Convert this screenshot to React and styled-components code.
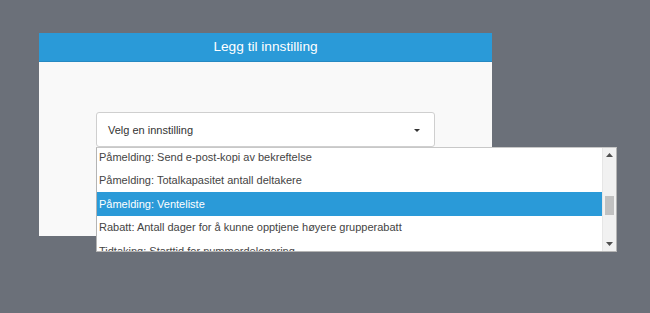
import React from 'react';
import styled, { createGlobalStyle } from "styled-components"

const options = [
  "Påmelding: Send e-post-kopi av bekreftelse",
  "Påmelding: Totalkapasitet antall deltakere",
  "Påmelding: Venteliste",
  "Rabatt: Antall dager for å kunne opptjene høyere grupperabatt",
  "Tidtaking: Starttid for nummerdelogering",
]

function App() {
  const selected = "Påmelding: Venteliste"
  return (
    <Page>
      <Global />
      <Modal>
        <Header>Legg til innstilling</Header>
        <Body>
          <SelectWrap>
            <Select>
              <span>Velg en innstilling</span>
              <Caret />
            </Select>
            <Dropdown>
              <List>
                <Inner>
                  {options.map((o) => (
                    <Option key={o} active={o === selected}>{o}</Option>
                  ))}
                </Inner>
              </List>
              <Scrollbar>
                <Arrow viewBox="0 0 7 4"><path d="M0 4 L3.5 0 L7 4 Z" /></Arrow>
                <Track>
                  <Thumb />
                </Track>
                <Arrow viewBox="0 0 7 4"><path d="M0 0 L3.5 4 L7 0 Z" /></Arrow>
              </Scrollbar>
            </Dropdown>
          </SelectWrap>
        </Body>
      </Modal>
    </Page>
  )
}

const Global = createGlobalStyle`
  body {
    margin: 0;
    background: #6b7079;
    font-family: "Liberation Sans", Arial, sans-serif;
  }
`
const Page = styled.div`
  width: 650px;
  height: 313px;
  padding: 33px 0 0 39px;
  box-sizing: border-box;
`
const Modal = styled.div`
  width: 453px;
  height: 203px;
  background: #f9f9f9;
  display: flex;
  flex-direction: column;
`
const Header = styled.div`
  height: 29px;
  background: #2a9ad8;
  border-bottom: 1px solid #2689c2;
  box-sizing: border-box;
  color: #fff;
  font-size: 13.7px;
  display: flex;
  align-items: center;
  justify-content: center;
  padding-bottom: 1px;
`
const Body = styled.div`
  padding: 50px 57px 0;
`
const SelectWrap = styled.div`
  position: relative;
`
const Select = styled.div`
  height: 35px;
  box-sizing: border-box;
  background: #fff;
  border: 1px solid #cfcfcf;
  border-radius: 3px;
  display: flex;
  align-items: center;
  justify-content: space-between;
  padding: 0 14px 0 11px;
  font-size: 11px;
  color: #333;
`
const Caret = styled.span`
  width: 0;
  height: 0;
  border-left: 3px solid transparent;
  border-right: 3px solid transparent;
  border-top: 3px solid #333;
  margin-top: 1px;
`
const Dropdown = styled.div`
  position: absolute;
  top: 35px;
  left: 0;
  width: 521px;
  height: 105px;
  box-sizing: border-box;
  background: #fff;
  border: 1px solid #b4b4b4;
  border-top-color: #c8c8c8;
  display: flex;
`
const List = styled.div`
  flex: 1;
  overflow: hidden;
`
const Inner = styled.div`
  margin-top: -3px;
`
const Option = styled.div`
  height: 23.5px;
  display: flex;
  align-items: center;
  padding-left: 2px;
  font-size: 11px;
  white-space: nowrap;
  color: ${(p) => (p.active ? "#fff" : "#444")};
  background: ${(p) => (p.active ? "#2a9ad8" : "transparent")};
`
const Scrollbar = styled.div`
  width: 13px;
  background: #f1f1f1;
  border-left: 1px solid #e6e6e6;
  display: flex;
  flex-direction: column;
  align-items: center;
`
const Arrow = styled.svg`
  width: 7px;
  height: 4px;
  margin: 5px 0;
  fill: #505050;
`
const Track = styled.div`
  flex: 1;
  width: 100%;
  padding-top: 34px;
  box-sizing: border-box;
  display: flex;
  justify-content: center;
`
const Thumb = styled.div`
  width: 9px;
  height: 19px;
  background: #c1c1c1;
`

export default App
